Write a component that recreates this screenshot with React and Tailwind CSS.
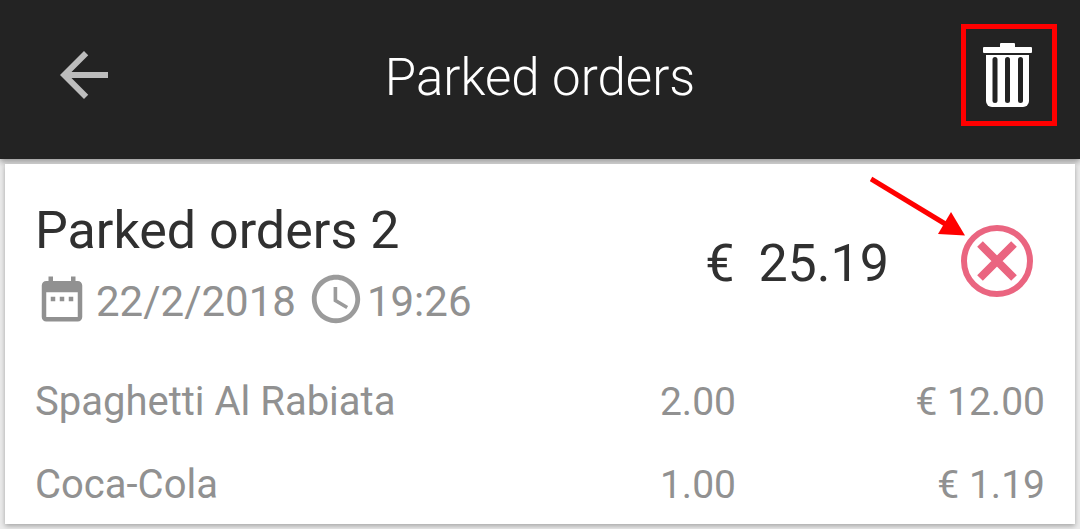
import { memo } from "react";
import { MdArrowBack, MdDateRange, MdAccessTime } from "react-icons/md";

const order = {
  name: "Parked orders 2",
  date: "22/2/2018",
  time: "19:26",
  total: "25.19",
  items: [
    { name: "Spaghetti Al Rabiata", quantity: "2.00", price: "€ 12.00" },
    { name: "Coca-Cola", quantity: "1.00", price: "€ 1.19" },
  ],
};

function TrashIcon() {
  return (
    <svg viewBox="0 0 52 64" className="w-[52px] h-16" aria-hidden="true">
      <g fill="#fff">
        <rect x="17" y="0" width="15" height="8" rx="1" />
        <rect x="0" y="4" width="49" height="6" rx="1" />
        <path d="M3 12h43v46a6 6 0 0 1-6 6H9a6 6 0 0 1-6-6z" />
      </g>
      <g fill="#232323">
        <rect x="9.5" y="14" width="5" height="46" rx="2.5" />
        <rect x="22" y="14" width="5" height="46" rx="2.5" />
        <rect x="35" y="14" width="5" height="46" rx="2.5" />
      </g>
    </svg>
  );
}

function RemoveIcon() {
  return (
    <svg
      viewBox="0 0 72 72"
      className="size-[72px]"
      fill="none"
      stroke="#ea6580"
      aria-hidden="true"
    >
      <circle cx="36" cy="36" r="33" strokeWidth="6" />
      <path d="M19 19l34 34M53 19L19 53" strokeWidth="8" />
    </svg>
  );
}

// Red pointer laid over the card, aimed at the remove button
function Pointer() {
  return (
    <svg
      viewBox="0 0 96 60"
      className="absolute right-[109px] top-3 w-24 h-[60px] pointer-events-none"
      aria-hidden="true"
    >
      <path d="M1 3l76 46" stroke="#f00" strokeWidth="5" />
      <path d="M95 59.5L81 36 68 58z" fill="#f00" />
    </svg>
  );
}

function Header() {
  return (
    <header className="relative grid grid-cols-[1fr_auto_1fr] items-center h-[159px] pb-[9px] px-[23px] bg-[#232323] shadow-[0_3px_6px_rgba(0,0,0,0.35)]">
      <button aria-label="Back" className="justify-self-start ml-[25px]">
        <MdArrowBack className="size-[72px] text-[#bdbdbd]" />
      </button>
      <h1 className="pt-[5px] text-[51px] leading-[64px] font-light text-white">
        Parked orders
      </h1>
      <button
        aria-label="Delete all"
        className="justify-self-end flex items-center justify-center w-24 h-[102px] border-5 border-[#f00]"
      >
        <TrashIcon />
      </button>
    </header>
  );
}

function OrderCard({ order }) {
  return (
    <article className="relative mx-[5px] mt-[5px] pt-[35px] pb-[15px] px-[30px] bg-white shadow-[0_2px_5px_rgba(0,0,0,0.3)]">
      <div className="flex items-center">
        <div className="flex-1">
          <h2 className="text-[52px] leading-[64px] text-[#303030]">
            {order.name}
          </h2>
          <div className="flex items-center mt-1 text-[42px] leading-[56px] text-[#919191]">
            <MdDateRange className="size-[54px]" />
            <span className="ml-[7px] pt-[7px]">{order.date}</span>
            <MdAccessTime className="size-[58px] ml-[11px] text-[#9b9b9b]" />
            <span className="ml-0.5 pt-[7px]">{order.time}</span>
          </div>
        </div>

        <p className="flex gap-6 pb-0.5 text-[52px] leading-[64px] text-[#303030]">
          <span>€</span>
          <span>{order.total}</span>
        </p>
        <button aria-label="Remove order" className="ml-[72px] mr-3 pb-[7px]">
          <RemoveIcon />
        </button>
      </div>

      <table className="w-full mt-[13px] text-[40px] leading-[48px] text-[#919191]">
        <tbody>
          {order.items.map((item) => (
            <tr key={item.name}>
              <td className="pt-[35px]">{item.name}</td>
              <td className="pt-[35px] text-[39px] text-right">
                {item.quantity}
              </td>
              <td className="pt-[35px] w-[309px] text-[39px] text-right">
                {item.price}
              </td>
            </tr>
          ))}
        </tbody>
      </table>

      <Pointer />
    </article>
  );
}

function App() {
  return (
    <div className="min-h-screen bg-[#ebebeb] font-[Roboto,sans-serif]">
      <Header />
      <main>
        <OrderCard order={order} />
      </main>
    </div>
  );
}

export default memo(App);
